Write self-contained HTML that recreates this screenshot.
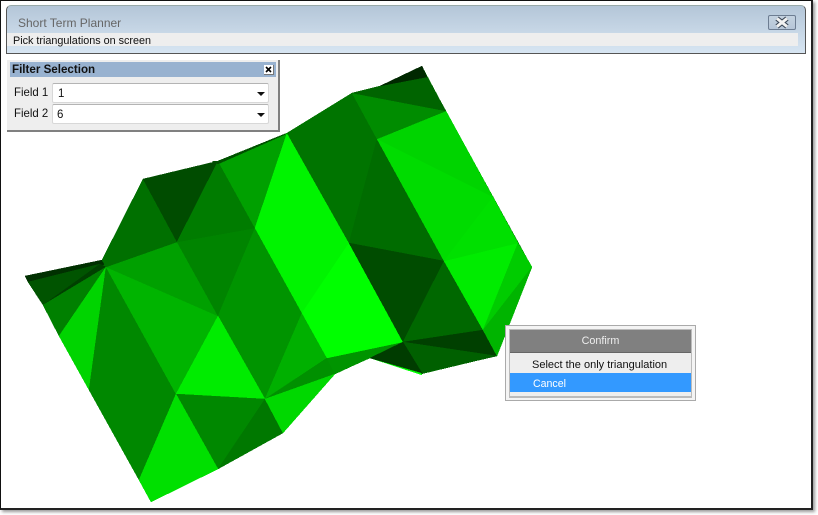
<!DOCTYPE html>
<html><head><meta charset="utf-8">
<style>
html,body{margin:0;padding:0;background:#fff}
body{width:818px;height:515px;position:relative;overflow:hidden;font-family:"Liberation Sans",sans-serif;font-size:11px;color:#111}
div{position:absolute;box-sizing:border-box}
.t{white-space:nowrap;line-height:14px}
.combo{left:52px;width:217px;height:20px;background:#fff;border:1px solid #d8d8d8;border-top:1px solid #b4b4b4;border-radius:2px}
.arr{left:204px;top:8px;width:0;height:0;border-left:4px solid transparent;border-right:4px solid transparent;border-top:4px solid #111}
</style></head><body>
<div style="left:0;top:0;width:813px;height:510px;background:#fff;border:1px solid #111;border-right:2px solid #222;border-bottom:2px solid #222;box-shadow:2px 2px 3px #999"></div>
<svg style="position:absolute;left:0;top:0" width="818" height="515" viewBox="0 0 818 515" shape-rendering="crispEdges">
<g stroke-width="0.4">
<polygon fill="#007000" points="25,276 102,260 143,179 218,161 287,133 352,93 380,86 422,66 446,111 532,267 497,356 422,374 370,358 335,374 283,433 218,469 151,502 43,305"/>
<polygon fill="#00ff00" stroke="#00ff00" points="370,358 422,375 403,342"/>
<polygon fill="#003000" stroke="#003000" points="25,276 102,260 106,264 28,282"/>
<polygon fill="#005400" stroke="#005400" points="28,282 100,264 43,305"/>
<polygon fill="#004000" stroke="#004000" points="43,305 100,264 106,267"/>
<polygon fill="#008000" stroke="#008000" points="43,305 106,267 59,336"/>
<polygon fill="#00d400" stroke="#00d400" points="59,336 106,267 89,390"/>
<polygon fill="#008800" stroke="#008800" points="106,267 89,390 139,480 176,394"/>
<polygon fill="#00b400" stroke="#00b400" points="106,267 218,316 176,394"/>
<polygon fill="#00a000" stroke="#00a000" points="106,267 177,242 218,316"/>
<polygon fill="#007000" stroke="#007000" points="102,260 143,179 177,242 106,267"/>
<polygon fill="#008400" stroke="#008400" points="177,242 255,228 218,316"/>
<polygon fill="#004c00" stroke="#004c00" points="143,179 218,161 177,242"/>
<polygon fill="#007c00" stroke="#007c00" points="218,161 255,228 177,242"/>
<polygon fill="#00a000" stroke="#00a000" points="218,161 287,133 255,228"/>
<polygon fill="#005000" stroke="#005000" points="212,161 218,161 287,133 284,135 218,164"/>
<polygon fill="#009400" stroke="#009400" points="218,316 255,228 302,313 265,399"/>
<polygon fill="#00ec00" stroke="#00ec00" points="218,316 265,399 176,394"/>
<polygon fill="#008800" stroke="#008800" points="176,394 265,399 218,469"/>
<polygon fill="#007800" stroke="#007800" points="265,399 283,433 218,469"/>
<polygon fill="#00e000" stroke="#00e000" points="176,394 218,469 151,502 139,480"/>
<polygon fill="#00b000" stroke="#00b000" points="265,399 327,358 302,313"/>
<polygon fill="#009000" stroke="#009000" points="265,399 327,358 350,350 350,367 335,374"/>
<polygon fill="#00d800" stroke="#00d800" points="265,399 335,374 283,433"/>
<polygon fill="#009400" stroke="#009400" points="327,358 403,342 370,358 350,367 335,374"/>
<polygon fill="#00f400" stroke="#00f400" points="255,228 287,133 349,243 302,313"/>
<polygon fill="#00ff00" stroke="#00ff00" points="302,313 349,243 403,342 327,358"/>
<polygon fill="#007400" stroke="#007400" points="287,133 352,93 377,139 349,243"/>
<polygon fill="#006c00" stroke="#006c00" points="377,139 444,261 349,243"/>
<polygon fill="#004c00" stroke="#004c00" points="349,243 444,261 403,342"/>
<polygon fill="#006800" stroke="#006800" points="444,261 483,330 403,342"/>
<polygon fill="#004000" stroke="#004000" points="403,342 483,330 497,356"/>
<polygon fill="#006000" stroke="#006000" points="403,342 497,356 422,373"/>
<polygon fill="#003c00" stroke="#003c00" points="403,342 422,373 370,358"/>
<polygon fill="#00ec00" stroke="#00ec00" points="444,261 518,243 483,330"/>
<polygon fill="#00cc00" stroke="#00cc00" points="518,243 532,267 483,330"/>
<polygon fill="#00b400" stroke="#00b400" points="532,267 497,356 483,330"/>
<polygon fill="#00dc00" stroke="#00dc00" points="377,139 493,197 444,261"/>
<polygon fill="#00e000" stroke="#00e000" points="493,197 518,243 444,261"/>
<polygon fill="#00d400" stroke="#00d400" points="377,139 446,111 493,197"/>
<polygon fill="#008c00" stroke="#008c00" points="352,93 446,111 377,139"/>
<polygon fill="#006400" stroke="#006400" points="352,93 380,86 427,77 446,111"/>
<polygon fill="#002800" stroke="#002800" points="380,86 422,66 427,77"/>
</g>
</svg>
<div style="left:6px;top:5px;width:800px;height:49px;border:1px solid #555;border-top-color:#9aa;border-radius:5px 5px 0 0;background:linear-gradient(#b4c6d8,#d7e5f2)"></div>
<div style="left:7px;top:33px;width:791px;height:13px;background:#eee"></div>
<div class="t" style="left:18px;top:16px;color:#666;font-size:12px">Short Term Planner</div>
<div class="t" style="left:13px;top:34px;color:#111;font-size:10.8px">Pick triangulations on screen</div>
<div style="left:768px;top:15px;width:28px;height:15px;border:1px solid #6d7d92;border-radius:2px;background:linear-gradient(#c4d2e0,#b6c6d8)"></div>
<svg style="position:absolute;left:768px;top:15px" width="28" height="15"><path d="M9 3.5 L19 11.5 M19 3.5 L9 11.5" stroke="#3c4858" stroke-width="5"/><path d="M9 3.5 L19 11.5 M19 3.5 L9 11.5" stroke="#f2f2f2" stroke-width="3"/></svg>

<div style="left:7px;top:60px;width:273px;height:72px;background:#eee;border-right:2px solid #808080;border-bottom:2px solid #808080"></div>
<div style="left:10px;top:62px;width:266px;height:15px;background:#98b2d0"></div>
<div class="t" style="left:12px;top:63px;font-weight:bold;font-size:11.6px;color:#111">Filter Selection</div>
<div style="left:264px;top:65px;width:10px;height:10px;background:#fff;border-right:1px solid #777;border-bottom:1px solid #777"></div>
<svg style="position:absolute;left:264px;top:65px" width="10" height="10"><path d="M2 2 L7 7 M7 2 L2 7" stroke="#000" stroke-width="1.6"/></svg>
<div class="t" style="left:14px;top:85px;font-size:12px;transform:scaleX(.95);transform-origin:0 0">Field 1</div>
<div class="t" style="left:14px;top:106px;font-size:12px;transform:scaleX(.95);transform-origin:0 0">Field 2</div>
<div class="combo" style="top:83px"><div class="t" style="left:5px;top:3px;font-size:11.5px">1</div><div class="arr"></div></div>
<div class="combo" style="top:104px"><div class="t" style="left:4px;top:3px;font-size:11.5px">6</div><div class="arr"></div></div>

<div style="left:505px;top:325px;width:191px;height:76px;background:#f4f4f4;border:1px solid #aaa"></div>
<div style="left:509px;top:329px;width:183px;height:69px;background:#bbb"></div>
<div style="left:510px;top:330px;width:181px;height:23px;background:#808080;border-bottom:1px solid #666"></div>
<div class="t" style="left:510px;top:334px;width:181px;text-align:center;color:#eee;font-size:10.8px">Confirm</div>
<div style="left:510px;top:353px;width:181px;height:20px;background:#eee"></div>
<div class="t" style="left:532px;top:358px;font-size:11px;color:#111">Select the only triangulation</div>
<div style="left:510px;top:373px;width:181px;height:19px;background:#3399ff"></div>
<div class="t" style="left:533px;top:377px;font-size:10.6px;color:#fff">Cancel</div>
<div style="left:510px;top:392px;width:181px;height:4px;background:#eee"></div>
</body></html>
